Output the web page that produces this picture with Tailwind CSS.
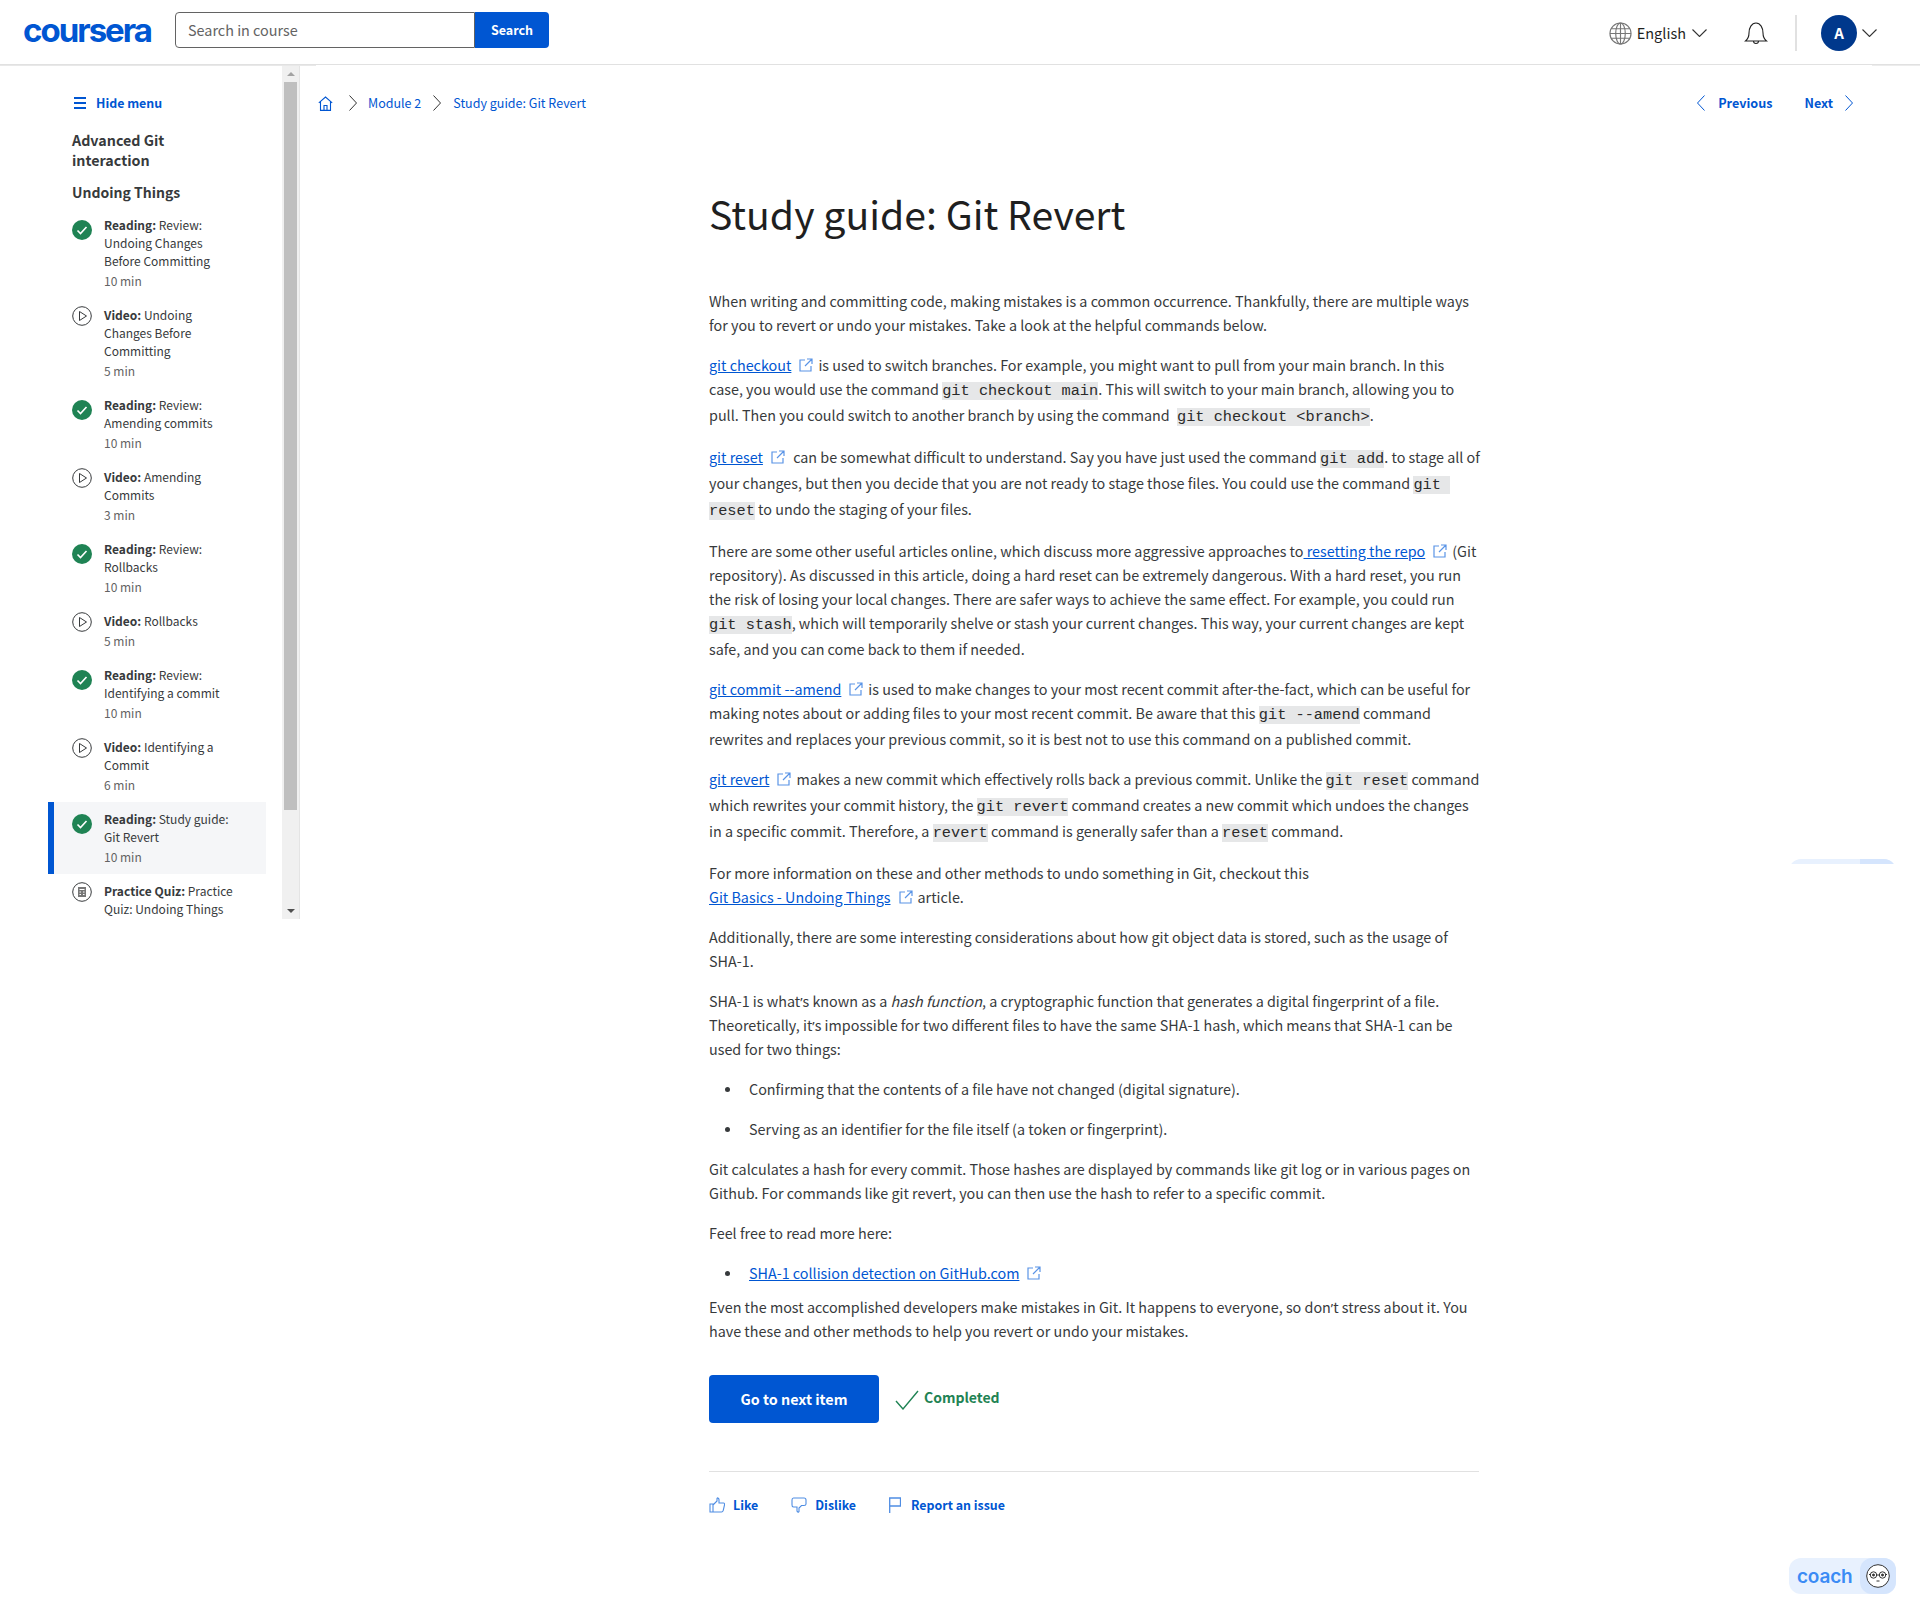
<!DOCTYPE html>
<html lang="en">
<head>
<meta charset="utf-8">
<title>Study guide: Git Revert</title>
<script src="https://cdn.jsdelivr.net/npm/@tailwindcss/browser@4"></script>
</head>
<body class="relative h-[1618px] w-[1920px] overflow-hidden bg-white font-['Noto_Sans_CJK_SC','Noto_Sans',sans-serif] text-[#373a3c]">

<header class="flex h-[65px] items-start border-b border-[#e1e1e1] pt-3">
  <div class="ml-[23px] flex h-9 w-[128px] items-center font-['Inter',sans-serif] text-[33px] font-bold leading-none tracking-[-2px] text-[#0056d2]">coursera</div>
  <div class="ml-6 flex h-9">
    <div class="flex h-9 w-[300px] items-center rounded-l border border-[#636363] pl-3 text-[14.400px] text-[#636363]">Search in course</div>
    <div class="flex h-9 w-[74px] items-center justify-center rounded-r bg-[#0056d2] text-[12.500px] font-semibold text-white">Search</div>
  </div>
  <div class="ml-auto mt-[3px] flex h-9 items-center pr-[43px]">
    <svg class="h-[23px] w-[23px]" viewBox="0 0 24 24" fill="none" stroke="#777" stroke-width="1.2"><circle cx="12" cy="12" r="11"/><ellipse cx="12" cy="12" rx="5" ry="11"/><path d="M1 12h22M2.5 7h19M2.5 17h19M12 1v22"/></svg>
    <span class="ml-[5px] text-[14.500px] leading-6 text-[#1f1f1f]">English</span>
    <svg class="ml-[6px] h-2 w-[15px]" viewBox="0 0 15 8" fill="none" stroke="#333" stroke-width="1.1"><path d="M.5.5l7 7 7-7"/></svg>
    <svg class="ml-[37px] h-6 w-6" viewBox="0 0 24 24" fill="none" stroke="#222" stroke-width="1.1"><path d="M1.5 20c2.5-2 3.5-4 3.5-8 0-5 2.5-10 7-10s7 5 7 10c0 4 1 6 3.500 8z"/><path d="M9.500 20a2.500 2.500 0 0 0 5 0"/></svg>
    <div class="ml-[27px] h-9 w-[2px] bg-[#e1e1e1]"></div>
    <div class="ml-6 flex h-9 w-9 items-center justify-center rounded-full bg-[#00388c] text-[15px] font-bold text-white">A</div>
    <svg class="ml-[5px] h-2 w-[15px]" viewBox="0 0 15 8" fill="none" stroke="#333" stroke-width="1.1"><path d="M.5.5l7 7 7-7"/></svg>
  </div>
</header>
<div class="absolute left-0 top-[65px] h-px w-[316px] bg-[#e8e8e8]"></div>
<div class="absolute left-[1872px] top-[65px] h-px w-12 bg-[#ececec]"></div>

<div class="flex">
  <aside class="flex h-[854px] w-[300px] overflow-hidden border-r border-[#e4e4e4]">
    <nav class="w-[282px] shrink-0 pl-12">
      <div class="ml-[26px] mt-[28px] flex h-5 items-center text-[#0056d2]">
        <svg class="h-3 w-3" viewBox="0 0 12 12" fill="#0056d2"><rect y="0" width="12" height="2"/><rect y="5" width="12" height="2"/><rect y="10" width="12" height="2"/></svg>
        <span class="ml-[10px] text-[12.400px] font-semibold leading-5">Hide menu</span>
      </div>
      <h2 class="ml-6 mt-[17px] text-[14.300px] font-semibold leading-5">Advanced Git<br>interaction</h2>
      <h3 class="ml-6 mt-3 text-[14px] font-semibold leading-5">Undoing Things</h3>
      <ul class="mt-[6px] w-[218px] text-[12px] leading-[18px]">
        <li class="flex gap-3 py-2 pl-6">
          <svg class="mt-[4px] h-5 w-5 shrink-0" viewBox="0 0 20 20"><circle cx="10" cy="10" r="10" fill="#1f8354"/><path d="M5.500 10.500l3 3 6-6.500" fill="none" stroke="#fff" stroke-width="1.600"/></svg>
          <div><span class="font-semibold">Reading:</span> Review:<br>Undoing Changes<br>Before Committing<div class="mt-[2px] text-[#636363]">10 min</div></div>
        </li>
        <li class="flex gap-3 py-2 pl-6">
          <svg class="h-5 w-5 shrink-0" viewBox="0 0 20 20" fill="none" stroke="#373a3c" stroke-width="1"><circle cx="10" cy="10" r="9.300"/><path d="M7.500 5.500v9l7-4.500z"/></svg>
          <div><span class="font-semibold">Video:</span> Undoing<br>Changes Before<br>Committing<div class="mt-[2px] text-[#636363]">5 min</div></div>
        </li>
        <li class="flex gap-3 py-2 pl-6">
          <svg class="mt-[4px] h-5 w-5 shrink-0" viewBox="0 0 20 20"><circle cx="10" cy="10" r="10" fill="#1f8354"/><path d="M5.500 10.500l3 3 6-6.500" fill="none" stroke="#fff" stroke-width="1.600"/></svg>
          <div><span class="font-semibold">Reading:</span> Review:<br>Amending commits<div class="mt-[2px] text-[#636363]">10 min</div></div>
        </li>
        <li class="flex gap-3 py-2 pl-6">
          <svg class="h-5 w-5 shrink-0" viewBox="0 0 20 20" fill="none" stroke="#373a3c" stroke-width="1"><circle cx="10" cy="10" r="9.300"/><path d="M7.500 5.500v9l7-4.500z"/></svg>
          <div><span class="font-semibold">Video:</span> Amending<br>Commits<div class="mt-[2px] text-[#636363]">3 min</div></div>
        </li>
        <li class="flex gap-3 py-2 pl-6">
          <svg class="mt-[4px] h-5 w-5 shrink-0" viewBox="0 0 20 20"><circle cx="10" cy="10" r="10" fill="#1f8354"/><path d="M5.500 10.500l3 3 6-6.500" fill="none" stroke="#fff" stroke-width="1.600"/></svg>
          <div><span class="font-semibold">Reading:</span> Review:<br>Rollbacks<div class="mt-[2px] text-[#636363]">10 min</div></div>
        </li>
        <li class="flex gap-3 py-2 pl-6">
          <svg class="h-5 w-5 shrink-0" viewBox="0 0 20 20" fill="none" stroke="#373a3c" stroke-width="1"><circle cx="10" cy="10" r="9.300"/><path d="M7.500 5.500v9l7-4.500z"/></svg>
          <div><span class="font-semibold">Video:</span> Rollbacks<div class="mt-[2px] text-[#636363]">5 min</div></div>
        </li>
        <li class="flex gap-3 py-2 pl-6">
          <svg class="mt-[4px] h-5 w-5 shrink-0" viewBox="0 0 20 20"><circle cx="10" cy="10" r="10" fill="#1f8354"/><path d="M5.500 10.500l3 3 6-6.500" fill="none" stroke="#fff" stroke-width="1.600"/></svg>
          <div><span class="font-semibold">Reading:</span> Review:<br>Identifying a commit<div class="mt-[2px] text-[#636363]">10 min</div></div>
        </li>
        <li class="flex gap-3 py-2 pl-6">
          <svg class="h-5 w-5 shrink-0" viewBox="0 0 20 20" fill="none" stroke="#373a3c" stroke-width="1"><circle cx="10" cy="10" r="9.300"/><path d="M7.500 5.500v9l7-4.500z"/></svg>
          <div><span class="font-semibold">Video:</span> Identifying a<br>Commit<div class="mt-[2px] text-[#636363]">6 min</div></div>
        </li>
        <li class="flex gap-3 border-l-[6px] border-[#0056d2] bg-[#f5f6f8] py-2 pl-[18px]">
          <svg class="mt-[4px] h-5 w-5 shrink-0" viewBox="0 0 20 20"><circle cx="10" cy="10" r="10" fill="#1f8354"/><path d="M5.500 10.500l3 3 6-6.500" fill="none" stroke="#fff" stroke-width="1.600"/></svg>
          <div><span class="font-semibold">Reading:</span> Study guide:<br>Git Revert<div class="mt-[2px] text-[#636363]">10 min</div></div>
        </li>
        <li class="flex gap-3 py-2 pl-6">
          <svg class="h-5 w-5 shrink-0" viewBox="0 0 20 20" fill="none" stroke="#373a3c" stroke-width="1"><circle cx="10" cy="10" r="9.300"/><rect x="6" y="5" width="8" height="10" fill="#777" stroke="none"/><path d="M7.500 7.500h5M7.500 10h1.500M11 10h1.500M7.500 12.500h1.500M11 12.500h1.500" stroke="#fff"/></svg>
          <div><span class="font-semibold">Practice Quiz:</span> Practice<br>Quiz: Undoing Things</div>
        </li>
      </ul>
    </nav>
    <div class="flex w-[17px] shrink-0 flex-col items-center bg-[#f0f0f0]">
      <div class="flex h-[17px] items-center justify-center"><div class="h-0 w-0 border-x-[4px] border-b-[4px] border-x-transparent border-b-[#a3a3a3]"></div></div>
      <div class="h-[728px] w-[13px] bg-[#bfbfbf]"></div>
      <div class="mt-auto flex h-[17px] items-center justify-center"><div class="h-0 w-0 border-x-[4px] border-t-[4px] border-x-transparent border-t-[#505050]"></div></div>
    </div>
  </aside>

  <main class="flex-1">
    <div class="mt-[28px] flex h-5 items-center pl-[18px] pr-[67px] text-[12.500px] text-[#0056d2]">
      <svg class="h-[15px] w-[15px]" viewBox="0 0 15 15" fill="none" stroke="#0056d2" stroke-width="1.100"><path d="M.8 6.800L7.500 1l6.700 5.800M2.500 5.500v8.900h10V5.500"/><path d="M6 14.400V9.500h3v4.900"/></svg>
      <svg class="ml-[16px] h-[16px] w-2" viewBox="0 0 8 16" fill="none" stroke="#333" stroke-width="1"><path d="M.5.500L7.500 8l-7 7.500"/></svg>
      <span class="ml-[11px]">Module 2</span>
      <svg class="ml-3 h-[16px] w-2" viewBox="0 0 8 16" fill="none" stroke="#333" stroke-width="1"><path d="M.5.500L7.500 8l-7 7.500"/></svg>
      <span class="ml-3">Study guide: Git Revert</span>
      <svg class="ml-auto h-[16px] w-2" viewBox="0 0 8 16" fill="none" stroke="#0056d2" stroke-width="1"><path d="M7.500.5L.5 8l7 7.500"/></svg>
      <span class="ml-[13px] text-[12.600px] font-semibold">Previous</span>
      <span class="ml-8 text-[12.600px] font-semibold">Next</span>
      <svg class="ml-3 h-[16px] w-2" viewBox="0 0 8 16" fill="none" stroke="#0056d2" stroke-width="1"><path d="M.5.500L7.500 8l-7 7.500"/></svg>
    </div>

    <article class="ml-[409px] w-[770px] text-[14.350px] leading-6 whitespace-nowrap">
      <h1 class="mt-[70px] text-[39.200px] font-normal leading-[60px] text-[#1f1f1f]">Study guide: Git Revert</h1>
      <p class="mt-[46px]">When writing and committing code, making mistakes is a common occurrence. Thankfully, there are multiple ways<br>for you to revert or undo your mistakes. Take a look at the helpful commands below.</p>
      <p class="mt-4"><a class="text-[#0056d2] underline">git checkout</a><svg class="ml-2 mr-[5px] inline h-[14px] w-[14px] align-[-1px]" viewBox="0 0 14 14" fill="none" stroke="#5a94e6" stroke-width="1.200"><path d="M6 2H1v11h11V8M8 1h5v5M13 1L6 8"/></svg>is used to switch branches. For example, you might want to pull from your main branch. In this<br>case, you would use the command <code class="bg-[#e6e7e8] font-['Liberation_Mono',monospace] text-[15.300px] text-[#2a2a2a]">git checkout main</code>. This will switch to your main branch, allowing you to<br>pull. Then you could switch to another branch by using the command  <code class="ml-1 bg-[#e6e7e8] font-['Liberation_Mono',monospace] text-[15.300px] text-[#2a2a2a]">git checkout &lt;branch&gt;</code>.</p>
      <p class="mt-4"><a class="text-[#0056d2] underline">git reset</a><svg class="ml-2 mr-[5px] inline h-[14px] w-[14px] align-[-1px]" viewBox="0 0 14 14" fill="none" stroke="#5a94e6" stroke-width="1.200"><path d="M6 2H1v11h11V8M8 1h5v5M13 1L6 8"/></svg> can be somewhat difficult to understand. Say you have just used the command <code class="bg-[#e6e7e8] font-['Liberation_Mono',monospace] text-[15.300px] text-[#2a2a2a]">git add</code>. to stage all of<br>your changes, but then you decide that you are not ready to stage those files. You could use the command <code class="bg-[#e6e7e8] font-['Liberation_Mono',monospace] text-[15.300px] text-[#2a2a2a]">git&nbsp;</code><br><code class="bg-[#e6e7e8] font-['Liberation_Mono',monospace] text-[15.300px] text-[#2a2a2a]">reset</code> to undo the staging of your files.</p>
      <p class="mt-4">There are some other useful articles online, which discuss more aggressive approaches to<a class="text-[#0056d2] underline"> resetting the repo</a><svg class="ml-2 mr-[5px] inline h-[14px] w-[14px] align-[-1px]" viewBox="0 0 14 14" fill="none" stroke="#5a94e6" stroke-width="1.200"><path d="M6 2H1v11h11V8M8 1h5v5M13 1L6 8"/></svg>(Git<br>repository). As discussed in this article, doing a hard reset can be extremely dangerous. With a hard reset, you run<br>the risk of losing your local changes. There are safer ways to achieve the same effect. For example, you could run<br><code class="bg-[#e6e7e8] font-['Liberation_Mono',monospace] text-[15.300px] text-[#2a2a2a]">git stash</code>, which will temporarily shelve or stash your current changes. This way, your current changes are kept<br>safe, and you can come back to them if needed.</p>
      <p class="mt-4"><a class="text-[#0056d2] underline">git commit --amend</a><svg class="ml-2 mr-[5px] inline h-[14px] w-[14px] align-[-1px]" viewBox="0 0 14 14" fill="none" stroke="#5a94e6" stroke-width="1.200"><path d="M6 2H1v11h11V8M8 1h5v5M13 1L6 8"/></svg>is used to make changes to your most recent commit after-the-fact, which can be useful for<br>making notes about or adding files to your most recent commit. Be aware that this <code class="bg-[#e6e7e8] font-['Liberation_Mono',monospace] text-[15.300px] text-[#2a2a2a]">git --amend</code> command<br>rewrites and replaces your previous commit, so it is best not to use this command on a published commit.</p>
      <p class="mt-4"><a class="text-[#0056d2] underline">git revert</a><svg class="ml-2 mr-[5px] inline h-[14px] w-[14px] align-[-1px]" viewBox="0 0 14 14" fill="none" stroke="#5a94e6" stroke-width="1.200"><path d="M6 2H1v11h11V8M8 1h5v5M13 1L6 8"/></svg>makes a new commit which effectively rolls back a previous commit. Unlike the <code class="bg-[#e6e7e8] font-['Liberation_Mono',monospace] text-[15.300px] text-[#2a2a2a]">git reset</code> command<br>which rewrites your commit history, the <code class="bg-[#e6e7e8] font-['Liberation_Mono',monospace] text-[15.300px] text-[#2a2a2a]">git revert</code> command creates a new commit which undoes the changes<br>in a specific commit. Therefore, a <code class="bg-[#e6e7e8] font-['Liberation_Mono',monospace] text-[15.300px] text-[#2a2a2a]">revert</code> command is generally safer than a <code class="bg-[#e6e7e8] font-['Liberation_Mono',monospace] text-[15.300px] text-[#2a2a2a]">reset</code> command.</p>
      <p class="mt-4">For more information on these and other methods to undo something in Git, checkout this<br><a class="text-[#0056d2] underline">Git Basics - Undoing Things</a><svg class="ml-2 mr-[5px] inline h-[14px] w-[14px] align-[-1px]" viewBox="0 0 14 14" fill="none" stroke="#5a94e6" stroke-width="1.200"><path d="M6 2H1v11h11V8M8 1h5v5M13 1L6 8"/></svg>article.</p>
      <p class="mt-4">Additionally, there are some interesting considerations about how git object data is stored, such as the usage of<br>SHA-1.</p>
      <p class="mt-4">SHA-1 is what<span class="font-['Noto_Sans',sans-serif] text-[13px] leading-[0]">’</span>s known as a <em>hash function</em>, a cryptographic function that generates a digital fingerprint of a file.<br>Theoretically, it<span class="font-['Noto_Sans',sans-serif] text-[13px] leading-[0]">’</span>s impossible for two different files to have the same SHA-1 hash, which means that SHA-1 can be<br>used for two things:</p>
      <ul class="mt-4 pl-10">
        <li class="relative"><span class="absolute left-[-24px] top-[10px] h-[5px] w-[5px] rounded-full bg-[#373a3c]"></span>Confirming that the contents of a file have not changed (digital signature).</li>
        <li class="relative mt-4"><span class="absolute left-[-24px] top-[10px] h-[5px] w-[5px] rounded-full bg-[#373a3c]"></span>Serving as an identifier for the file itself (a token or fingerprint).</li>
      </ul>
      <p class="mt-4">Git calculates a hash for every commit. Those hashes are displayed by commands like git log or in various pages on<br>Github. For commands like git revert, you can then use the hash to refer to a specific commit.</p>
      <p class="mt-4">Feel free to read more here:</p>
      <ul class="mt-4 pl-10">
        <li class="relative"><span class="absolute left-[-24px] top-[10px] h-[5px] w-[5px] rounded-full bg-[#373a3c]"></span><a class="text-[#0056d2] underline">SHA-1 collision detection on GitHub.com</a><svg class="mx-2 inline h-[14px] w-[14px] align-[-1px]" viewBox="0 0 14 14" fill="none" stroke="#5a94e6" stroke-width="1.200"><path d="M6 2H1v11h11V8M8 1h5v5M13 1L6 8"/></svg></li>
      </ul>
      <p class="mt-[10px]">Even the most accomplished developers make mistakes in Git. It happens to everyone, so don<span class="font-['Noto_Sans',sans-serif] text-[13px] leading-[0]">’</span>t stress about it. You<br>have these and other methods to help you revert or undo your mistakes.</p>

      <div class="mt-[32px] flex items-start">
        <div class="flex h-12 w-[170px] items-center justify-center rounded bg-[#0056d2] text-[14.350px] font-semibold text-white">Go to next item</div>
        <svg class="ml-4 mt-[15px] h-[20px] w-6" viewBox="0 0 24 20" fill="none" stroke="#1f8354" stroke-width="1.400"><path d="M1 11l7 8L23 1"/></svg>
        <span class="ml-[5px] mt-[10px] text-[14px] font-semibold text-[#1f8354]">Completed</span>
      </div>
      <div class="mt-12 h-px bg-[#e1e1e1]"></div>
      <div class="mt-[23px] flex items-center text-[12.400px] font-semibold leading-5 text-[#0056d2]">
        <svg class="h-4 w-4" viewBox="0 0 16 16" fill="none" stroke="#4f8de3" stroke-width="1.100"><path d="M1 7h3v8H1zM4 8l4-4V1.500c0-1 2-.8 2 1V6h4.500c1 0 1.200 1 1 2l-1.300 5.500c-.2 1-.8 1.500-1.700 1.500H4"/></svg>
        <span class="ml-2">Like</span>
        <svg class="ml-[33px] h-4 w-4" viewBox="0 0 16 16" fill="none" stroke="#4f8de3" stroke-width="1.100"><path d="M1 3c0-1 .5-2 1.500-2H13c1.200 0 2 1 2 2v4c0 1-.8 1.500-2 1.500h-2.500L8 11v3.500c0 1-2 .8-2-.5V10H2.500C1.500 10 1 9 1 8z"/></svg>
        <span class="ml-[8px]">Dislike</span>
        <svg class="ml-[33px] h-4 w-3" viewBox="0 0 12 16" fill="none" stroke="#4f8de3" stroke-width="1.300"><path d="M.7 16V1H11.500v8H.7"/></svg>
        <span class="ml-[10px]">Report an issue</span>
      </div>
    </article>
  </main>
</div>

<div class="absolute left-[1789px] top-[859px] h-[5px] w-[107px] overflow-hidden">
  <div class="flex h-9 w-[107px] overflow-hidden rounded-xl bg-[#e8f1fe]"><div class="ml-auto h-9 w-9 bg-[#d5e5fd]"></div></div>
</div>
<div class="absolute left-[1789px] top-[1558px] flex h-9 w-[107px] items-center overflow-hidden rounded-xl bg-[#e8f1fe]">
  <span class="ml-2 font-['Inter',sans-serif] text-[19px] font-semibold leading-none tracking-[-0.200px] text-[#3b8bf5]">coach</span>
  <div class="ml-auto flex h-9 w-9 items-center justify-center rounded-l-xl bg-[#d5e5fd]">
    <svg class="h-6 w-6" viewBox="0 0 24 24" fill="#fff" stroke="#333" stroke-width="1"><circle cx="12" cy="12" r="11.300"/><circle cx="7.500" cy="11" r="3.200" fill="none"/><circle cx="16.500" cy="11" r="3.200" fill="none"/><circle cx="7.500" cy="11" r="1" fill="#333"/><circle cx="16.500" cy="11" r="1" fill="#333"/><path d="M10.700 11h2.600M3 10.500h1.300M19.700 10.500H21M10.500 17h3" fill="none"/></svg>
  </div>
</div>
</body>
</html>
